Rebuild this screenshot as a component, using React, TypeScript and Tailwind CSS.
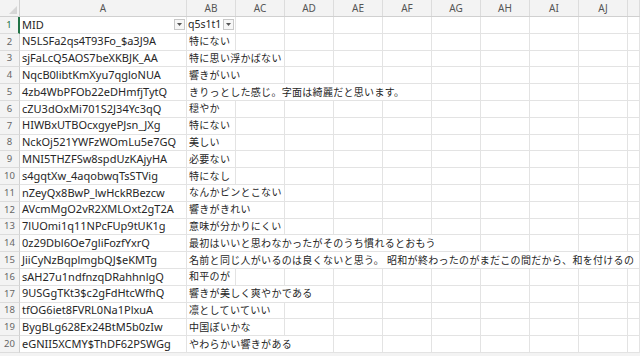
import React from 'react';

type Row = [string, string, number];

const ROWS: Row[] = [
  ['N5LSFa2qs4T93Fo_$a3J9A', '特にない', 1],
  ['sjFaLcQ5AOS7beXKBJK_AA', '特に思い浮かばない', 2],
  ['NqcB0libtKmXyu7qgloNUA', '響きがいい', 2],
  ['4zb4WbPFOb22eDHmfjTytQ', 'きりっとした感じ。字面は綺麗だと思います。', 5],
  ['cZU3dOxMi701S2J34Yc3qQ', '穏やか', 1],
  ['HIWBxUTBOcxgyePJsn_JXg', '特にない', 1],
  ['NckOj521YWFzWOmLu5e7GQ', '美しい', 1],
  ['MNI5THZFSw8spdUzKAjyHA', '必要ない', 1],
  ['s4gqtXw_4aqobwqTsSTVig', '特になし', 1],
  ['nZeyQx8BwP_lwHckRBezcw', 'なんかピンとこない', 2],
  ['AVcmMgO2vR2XMLOxt2gT2A', '響きがきれい', 2],
  ['7lUOmi1q11NPcFUp9tUK1g', '意味が分かりにくい', 2],
  ['0z29Dbl6Oe7gliFozfYxrQ', '最初はいいと思わなかったがそのうち慣れるとおもう', 6],
  ['JiiCyNzBqplmgbQJ$eKMTg', '名前と同じ人がいるのは良くないと思う。 昭和が終わったのがまだこの間だから、和を付けるの', 10],
  ['sAH27u1ndfnzqDRahhnlgQ', '和平のが', 1],
  ['9USGgTKt3$c2gFdHtcWfhQ', '響きが美しく爽やかである', 3],
  ['tfOG6iet8FVRL0Na1PlxuA', '凛としていていい', 2],
  ['BygBLg628Ex24BtM5b0zIw', '中国ぽいかな', 2],
  ['eGNII5XCMY$ThDF62PSWGg', 'やわらかい響きがある', 3],
];

const SPAN: Record<number, string> = {
  1: 'col-span-1',
  2: 'col-span-2',
  3: 'col-span-3',
  4: 'col-span-4',
  5: 'col-span-5',
  6: 'col-span-6',
  10: 'col-span-10',
};

const COLS = ['AB', 'AC', 'AD', 'AE', 'AF', 'AG', 'AH', 'AI', 'AJ', ''];

const gridCols = 'grid grid-cols-[20px_167px_repeat(9,49px)_1fr]';
const cell = 'border-r border-b border-[#e3e3e3] h-[16.8px]';

const FilterButton = () => (
  <div className="w-[11px] h-[11px] border border-[#c8c8c8] bg-[#f7f7f7] flex items-center justify-center shrink-0">
    <svg width="5" height="3" viewBox="0 0 5 3">
      <path d="M0 0h5L2.5 3z" fill="#555" />
    </svg>
  </div>
);

const RowHead = ({ n, active }: { n: number; active?: boolean }) => (
  <div
    className={`h-[16.8px] border-b border-[#dcdcdc] bg-[#f3f3f3] flex items-center justify-center text-[9.5px] ${
      active ? 'border-r-2 border-r-[#217346] text-[#217346]' : 'border-r border-r-[#d0d0d0] text-[#666]'
    }`}
  >
    {n}
  </div>
);

export default function App() {
  return (
    <div
      className="w-[640px] h-[356px] overflow-hidden bg-white flex flex-col text-[#262626]"
      style={{ fontFamily: '"Noto Sans", "Noto Sans CJK JP", sans-serif' }}
    >
      {/* column headers */}
      <div className={`${gridCols} h-[17px] bg-[#f3f3f3] border-b border-[#d0d0d0] text-[10px] text-[#555]`}>
        <div className="relative border-r border-[#d0d0d0]">
          <svg className="absolute right-[2px] bottom-[2px]" width="8" height="8" viewBox="0 0 8 8">
            <path d="M8 0v8H0z" fill="#d6d6d6" />
          </svg>
        </div>
        <div className="border-r border-[#dcdcdc] flex items-center justify-center">A</div>
        {COLS.map((c, i) => (
          <div key={i} className="border-r border-[#dcdcdc] flex items-center justify-center">
            {c}
          </div>
        ))}
      </div>

      {/* row 1: filter header */}
      <div className={gridCols}>
        <RowHead n={1} active />
        <div className={`${cell} flex items-center justify-between pl-[2px] pr-[1px] text-[11px]`}>
          <span>MID</span>
          <FilterButton />
        </div>
        <div className={`${cell} flex items-center justify-between pl-[1px] pr-[1px] text-[10.5px]`}>
          <span>q5s1t1</span>
          <FilterButton />
        </div>
        {COLS.slice(1).map((_, i) => (
          <div key={i} className={cell} />
        ))}
      </div>

      {ROWS.map(([mid, text, span], idx) => (
        <div key={mid} className={gridCols}>
          <RowHead n={idx + 2} />
          <div className={`${cell} flex items-center pl-[2px] text-[11px] whitespace-nowrap overflow-hidden`}>{mid}</div>
          <div
            className={`${cell} ${SPAN[span]} flex items-center pl-[2px] text-[10px] tracking-[0.3px] whitespace-nowrap overflow-hidden`}
          >
            {text}
          </div>
          {COLS.slice(span).map((_, i) => (
            <div key={i} className={cell} />
          ))}
        </div>
      ))}

      <div className="flex-1 bg-[#f3f3f3]" />
    </div>
  );
}
